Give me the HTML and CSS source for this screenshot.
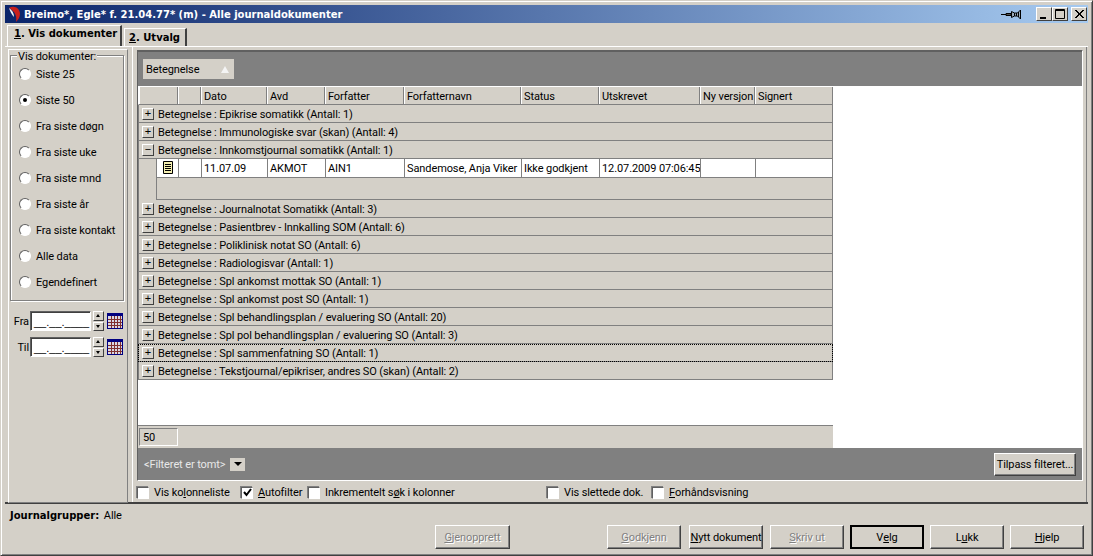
FILE: index.html
```html
<!DOCTYPE html>
<html lang="en">
<head>
  <meta charset="UTF-8" />
  <title>Alle journaldokumenter</title>
  <link rel="stylesheet" href="styles.css">
</head>
<body>
<div class="window">
  <div class="titlebar">
    <svg class="logo" width="16" height="18" viewBox="0 0 16 18"><path d="M3 3 C8 0 14 3 14 9 C14 12 12 15 10 17 C11 12 10 7 3 3Z" fill="#c8201c"/><path d="M3 3 C6 5 8 8 8 12 C6 10 4 6 3 3Z" fill="#f4f4f4"/></svg>
    <span class="title">Breimo*, Egle* f. 21.04.77* (m) - Alle journaldokumenter</span>
    <svg class="pin" width="22" height="11" viewBox="0 0 22 11"><path d="M0 5.500h9" stroke="#000"/><path d="M5 4.500h5v2H5z" stroke="#000" fill="#555"/><path d="M10.500 2.500l3 1.500h3l3-3v9l-3-3h-3l-3 1.500z" fill="#9ab" stroke="#000"/><path d="M13.500 4v3M15.500 4v3M17.500 3v5" stroke="#000"/></svg>
    <div class="win-btn first"><svg width="14" height="12" viewBox="0 0 14 12"><path d="M3 9h6v2H3z"/></svg></div>
    <div class="win-btn"><svg width="14" height="12" viewBox="0 0 14 12"><path d="M2.500 1.500h9v9h-9z M2 2.500h10" fill="none" stroke="#000"/></svg></div>
    <div class="win-btn close"><svg width="14" height="12" viewBox="0 0 14 12"><path d="M3 2l8 8M4 2l8 8M11 2l-8 8M12 2l-8 8" stroke="#000" fill="none"/></svg></div>
  </div>

  <div class="tabs">
    <div class="tab active"><u>1</u>. Vis dokumenter</div>
    <div class="tab"><u>2</u>. Utvalg</div>
  </div>

  <div class="panel">
    <div class="side">
      <div class="group">
        <span class="group-label">Vis dokumenter:</span>
        <div class="radio-row"><i class="radio"></i>Siste 25</div>
        <div class="radio-row"><i class="radio on"></i>Siste 50</div>
        <div class="radio-row"><i class="radio"></i>Fra siste døgn</div>
        <div class="radio-row"><i class="radio"></i>Fra siste uke</div>
        <div class="radio-row"><i class="radio"></i>Fra siste mnd</div>
        <div class="radio-row"><i class="radio"></i>Fra siste år</div>
        <div class="radio-row"><i class="radio"></i>Fra siste kontakt</div>
        <div class="radio-row"><i class="radio"></i>Alle data</div>
        <div class="radio-row"><i class="radio"></i>Egendefinert</div>
      </div>
      <div class="date-row">
        <span class="date-label">Fra</span>
        <div class="date-input">__.__.____</div>
        <div class="spin"><b class="up"></b><b class="down"></b></div>
        <svg class="cal" width="16" height="16" viewBox="0 0 16 16"><path d="M0 0h16v16H0z" fill="#000080"/><path d="M1 3h14v12H1z" fill="#d8d8e4"/><path d="M1 6.500h14M1 9.500h14M1 12.500h14M4.500 3v12M7.500 3v12M10.500 3v12M13.500 3v12" stroke="#803030"/></svg>
      </div>
      <div class="date-row">
        <span class="date-label">Til</span>
        <div class="date-input">__.__.____</div>
        <div class="spin"><b class="up"></b><b class="down"></b></div>
        <svg class="cal" width="16" height="16" viewBox="0 0 16 16"><path d="M0 0h16v16H0z" fill="#000080"/><path d="M1 3h14v12H1z" fill="#d8d8e4"/><path d="M1 6.500h14M1 9.500h14M1 12.500h14M4.500 3v12M7.500 3v12M10.500 3v12M13.500 3v12" stroke="#803030"/></svg>
      </div>
    </div>

    <div class="main">
      <div class="frame">
        <div class="group-bar">
          <div class="chip">Betegnelse <span class="sort"></span></div>
        </div>
        <div class="grid-area">
          <div class="grid">
            <div class="head">
              <span></span><span></span><span>Dato</span><span>Avd</span><span>Forfatter</span><span>Forfatternavn</span><span>Status</span><span>Utskrevet</span><span>Ny versjon</span><span>Signert</span>
            </div>
            <div class="grp"><i class="exp">+</i>Betegnelse : Epikrise somatikk (Antall: 1)</div>
            <div class="grp"><i class="exp">+</i>Betegnelse : Immunologiske svar (skan) (Antall: 4)</div>
            <div class="grp"><i class="exp">−</i>Betegnelse : Innkomstjournal somatikk (Antall: 1)</div>
            <div class="expanded">
              <div class="data">
                <span class="doc"><svg width="12" height="13" viewBox="0 0 12 13"><path d="M1.500 .5h9v12h-9z" fill="#f4eeb0" stroke="#000"/><path d="M3 3.500h6M3 5.500h6M3 7.500h6M3 9.500h6" stroke="#000"/></svg></span>
                <span></span><span>11.07.09</span><span>AKMOT</span><span>AIN1</span><span>Sandemose, Anja Viker</span><span>Ikke godkjent</span><span>12.07.2009 07:06:45</span><span></span><span></span>
              </div>
              <div class="blank"></div>
            </div>
            <div class="grp"><i class="exp">+</i>Betegnelse : Journalnotat Somatikk (Antall: 3)</div>
            <div class="grp"><i class="exp">+</i>Betegnelse : Pasientbrev - Innkalling SOM (Antall: 6)</div>
            <div class="grp"><i class="exp">+</i>Betegnelse : Poliklinisk notat SO (Antall: 6)</div>
            <div class="grp"><i class="exp">+</i>Betegnelse : Radiologisvar (Antall: 1)</div>
            <div class="grp"><i class="exp">+</i>Betegnelse : Spl ankomst mottak SO (Antall: 1)</div>
            <div class="grp"><i class="exp">+</i>Betegnelse : Spl ankomst post SO (Antall: 1)</div>
            <div class="grp"><i class="exp">+</i>Betegnelse : Spl behandlingsplan / evaluering SO (Antall: 20)</div>
            <div class="grp"><i class="exp">+</i>Betegnelse : Spl pol behandlingsplan / evaluering SO (Antall: 3)</div>
            <div class="grp focus"><i class="exp">+</i>Betegnelse : Spl sammenfatning SO (Antall: 1)</div>
            <div class="grp"><i class="exp">+</i>Betegnelse : Tekstjournal/epikriser, andres SO (skan) (Antall: 2)</div>
            <div class="grid-fill"></div>
            <div class="count"><span class="count-cell">50</span></div>
          </div>
        </div>
        <div class="filter-bar">
          <span class="filter-text">&lt;Filteret er tomt&gt;</span>
          <div class="filter-drop"><span></span></div>
          <div class="btn filter-btn">Tilpass filteret...</div>
        </div>
      </div>
      <div class="checks">
        <label class="check w-a"><i class="box"></i>Vis ko<u>l</u>onneliste</label>
        <label class="check w-b"><i class="box"><svg width="9" height="9" viewBox="0 0 9 9"><path d="M1 4l2.500 3L8 1" fill="none" stroke="#000" stroke-width="2"/></svg></i><u>A</u>utofilter</label>
        <label class="check w-c"><i class="box"></i>Inkrementelt s<u>ø</u>k i kolonner</label>
        <label class="check w-d"><i class="box"></i>Vis slettede dok.</label>
        <label class="check"><i class="box"></i><u>F</u>orhåndsvisning</label>
      </div>
    </div>
  </div>

  <div class="footer">
    <div class="journal"><b>Journalgrupper:</b> Alle</div>
    <div class="buttons">
      <div class="btn wide disabled restore"><u>G</u>jenopprett</div>
      <div class="btn wide disabled approve"><u>G</u>odkjenn</div>
      <div class="btn wide new-doc"><u>N</u>ytt dokument</div>
      <div class="btn wide disabled"><u>S</u>kriv ut</div>
      <div class="btn wide default">V<u>e</u>lg</div>
      <div class="btn wide">L<u>u</u>kk</div>
      <div class="btn wide"><u>H</u>jelp</div>
    </div>
  </div>
</div>
</body>
</html>
```

FILE: styles.css
```css
* {
  box-sizing: border-box;
}
html, body {
  margin: 0;
  height: 100%;
  overflow: hidden;
}
body {
  font-family: Roboto, "Liberation Sans", Arial, sans-serif;
  font-size: 11px;
  letter-spacing: -.1px;
  color: #000;
  background: #d4d0c8;
}
i {
  font-style: normal;
}

/* window frame */
.window {
  width: 1093px;
  height: 556px;
  padding: 4px 4px 3px 4px;
  background: #d4d0c8;
  border: 1px solid #404040;
  border-top-color: #d4d0c8;
  border-left-color: #d4d0c8;
  box-shadow: inset 1px 1px 0 #fff, inset -1px -1px 0 #808080;
  display: flex;
  flex-direction: column;
}
.titlebar {
  height: 18px;
  flex: none;
  display: flex;
  align-items: center;
  background: linear-gradient(to right, #0a246a, #a6caf0);
  color: #fff;
  padding-right: 1px;
}
.logo {
  margin: 0 2px 0 1px;
  flex: none;
}
.title {
  font-family: "DejaVu Sans", sans-serif;
  font-weight: bold;
  font-size: 10px;
  letter-spacing: 0;
  flex: 1;
}
.pin {
  margin-right: 13px;
}
.win-btn {
  width: 16px;
  height: 14px;
  background: #d4d0c8;
  border: 1px solid;
  border-color: #fff #404040 #404040 #fff;
  display: flex;
  align-items: center;
  justify-content: center;
}
.win-btn svg {
  display: block;
}
.win-btn.close {
  margin-left: 3px;
}

/* tabs */
.tabs {
  height: 23px;
  flex: none;
  display: flex;
  align-items: flex-end;
  padding-left: 2px;
}
.tab {
  height: 18px;
  padding: 2px 5px 0 4px;
  font-family: "DejaVu Sans", sans-serif;
  font-size: 10px;
  letter-spacing: 0;
  line-height: 14px;
  font-weight: bold;
  border-top: 1px solid #fff;
  border-left: 1px solid #fff;
  border-right: 2px solid #404040;
}
.tab.active {
  width: 115px;
  height: 21px;
  padding: 1px 0 0 6px;
  margin-right: 2px;
  white-space: nowrap;
}

.panel {
  height: 458px;
  flex: none;
  border-top: 1px solid #fff;
  border-bottom: 2px solid #404040;
  display: flex;
  padding-left: 3px;
}

/* left column */
.side {
  width: 120px;
  height: 454px;
  margin-top: 2px;
  padding: 5px 3px 0 1px;
  border: 1px solid #808080;
  border-top-color: #fff;
  border-left-color: #fff;
  flex: none;
}
.group {
  position: relative;
  height: 246px;
  border: 1px solid #808080;
  box-shadow: 1px 1px 0 #fff, inset 1px 1px 0 #fff;
  padding-top: 5px;
}
.group-label {
  position: absolute;
  top: -6px;
  left: 6px;
  padding: 0 1px;
  background: #d4d0c8;
  white-space: nowrap;
}
.radio-row {
  height: 26px;
  display: flex;
  align-items: center;
  padding-left: 8px;
  white-space: nowrap;
}
.radio {
  width: 12px;
  height: 12px;
  margin-right: 5px;
  border-radius: 50%;
  background: #fff;
  border: 1px solid;
  border-color: #606060 #fff #fff #606060;
  display: flex;
  align-items: center;
  justify-content: center;
}
.radio.on::after {
  content: "";
  width: 4px;
  height: 4px;
  border-radius: 50%;
  background: #000;
}
.date-row {
  height: 26px;
  display: flex;
  align-items: center;
  margin-left: 2px;
}
.group + .date-row {
  margin-top: 7px;
}
.date-label {
  width: 18px;
  text-align: right;
  padding-right: 1px;
}
.date-input {
  width: 61px;
  height: 20px;
  background: #fff;
  border: 1px solid;
  border-color: #606060 #fff #fff #606060;
  box-shadow: inset 1px 1px 0 #404040;
  padding: 3px 0 0 3px;
  font-family: "Liberation Sans", sans-serif;
  letter-spacing: 0;
  line-height: 14px;
}
.spin {
  width: 11px;
  height: 20px;
  margin-left: 2px;
  display: flex;
  flex-direction: column;
  gap: 1px;
}
.spin b {
  flex: 1;
  background: #d4d0c8;
  border: 1px solid;
  border-color: #fff #404040 #404040 #fff;
  position: relative;
}
.spin b::after {
  content: "";
  position: absolute;
  left: 2px;
  top: 2px;
  border-left: 2px solid transparent;
  border-right: 2px solid transparent;
}
.spin .up::after {
  border-bottom: 3px solid #000;
}
.spin .down::after {
  border-top: 3px solid #000;
}
.cal {
  margin-left: 3px;
}

/* main area */
.main {
  width: 955px;
  margin-left: 4px;
  padding: 3px 0 0 0;
  border-left: 1px solid #fff;
  border-right: 1px solid #808080;
  display: flex;
  flex-direction: column;
}
.frame {
  margin: 0 3px 0 4px;
  height: 431px;
  flex: none;
  border: 1px solid;
  border-color: #606060 #fff #fff #606060;
  background: #808080;
  display: flex;
  flex-direction: column;
}
.group-bar {
  height: 35px;
  flex: none;
  border-top: 1px solid #606060;
  padding: 7px 0 0 5px;
}
.chip {
  width: 91px;
  height: 20px;
  background: #d4d0c8;
  display: flex;
  align-items: center;
  justify-content: space-between;
  padding: 0 3px 0 3px;
}
.sort {
  margin-right: 2px;
  border-left: 4px solid transparent;
  border-right: 4px solid transparent;
  border-bottom: 7px solid #f4f4f4;
}
.grid-area {
  flex: 1;
  background: #fff;
  display: flex;
}
.grid {
  width: 695px;
  display: flex;
  flex-direction: column;
  border-top: 1px solid #fff;
}
.head, .data {
  display: grid;
  grid-template-columns: 39px 23px 66px 58px 79px 117px 78px 101px 55px 1fr;
}
.head {
  height: 18px;
  background: #d4d0c8;
  border-bottom: 1px solid #808080;
  border-left: 1px solid #fff;
  border-right: 1px solid #808080;
  line-height: 19px;
}
.head span {
  padding-left: 2px;
  border-left: 1px solid #fff;
  border-right: 1px solid #808080;
  white-space: nowrap;
  overflow: hidden;
}
.head span:last-child {
  border-right: 0;
}
.grp {
  height: 18px;
  background: #d4d0c8;
  border-bottom: 1px solid #808080;
  border-left: 1px solid #808080;
  border-right: 1px solid #808080;
  display: flex;
  align-items: center;
  padding: 1px 0 0 3px;
  white-space: nowrap;
}
.grp.focus {
  outline: 1px dotted #000;
  outline-offset: -1px;
}
.exp {
  width: 12px;
  height: 12px;
  margin: -1px 4px 0 0;
  border: 1px solid;
  border-color: #fff #404040 #404040 #fff;
  font-family: "Liberation Sans", sans-serif;
  font-size: 11px;
  line-height: 9px;
  text-align: center;
}
.expanded {
  background: #d4d0c8;
  border-left: 1px solid #808080;
  border-right: 1px solid #808080;
  padding-left: 17px;
}
.data {
  height: 19px;
  grid-template-columns: 22px 23px 66px 58px 79px 117px 78px 101px 55px 1fr;
  background: #fff;
  border-bottom: 1px solid #808080;
  border-left: 1px solid #808080;
  line-height: 20px;
}
.data span {
  padding-left: 2px;
  border-right: 1px solid #808080;
  white-space: nowrap;
  overflow: hidden;
}
.data span:last-child {
  border-right: 0;
}
.data .doc {
  padding: 2px 0 0 5px;
  line-height: 0;
}
.blank {
  height: 22px;
  border-bottom: 1px solid #808080;
  border-left: 1px solid #808080;
}
.grid-fill {
  flex: 1;
  background: #fff;
}
.count {
  height: 23px;
  background: #d4d0c8;
  padding: 2px 0 0 1px;
  border-top: 1px solid #808080;
}
.count-cell {
  display: block;
  width: 39px;
  height: 18px;
  padding: 2px 0 0 3px;
  border: 1px solid;
  border-color: #808080 #fff #fff #808080;
}
.filter-bar {
  height: 32px;
  flex: none;
  display: flex;
  align-items: center;
  padding: 0 6px 0 6px;
  color: #e8e8e8;
}
.filter-text {
  width: 86px;
  white-space: nowrap;
}
.filter-drop {
  width: 15px;
  height: 13px;
  background: #d4d0c8;
  display: flex;
  align-items: center;
  justify-content: center;
}
.filter-drop span {
  border-left: 4px solid transparent;
  border-right: 4px solid transparent;
  border-top: 4px solid #000;
}
.btn {
  background: #d4d0c8;
  color: #000;
  border: 1px solid;
  border-color: #fff #404040 #404040 #fff;
  box-shadow: inset -1px -1px 0 #808080;
  display: flex;
  align-items: center;
  justify-content: center;
  white-space: nowrap;
}
.filter-btn {
  width: 82px;
  height: 23px;
  margin-left: auto;
}
.checks {
  display: flex;
  align-items: center;
  height: 20px;
  margin-top: 2px;
  padding-left: 4px;
}
.check {
  display: flex;
  align-items: center;
  white-space: nowrap;
}
.box {
  width: 12px;
  height: 12px;
  flex: none;
  margin-right: 5px;
  background: #fff;
  border: 1px solid;
  border-color: #606060 #fff #fff #606060;
  box-shadow: -1px -1px 0 #808080;
  display: flex;
  align-items: center;
  justify-content: center;
}
.box svg {
  display: block;
}
.w-a {
  width: 104px;
}
.w-b {
  width: 67px;
}
.w-c {
  width: 239px;
}
.w-d {
  width: 105px;
}

/* bottom */
.footer {
  flex: 1;
}
.journal {
  padding: 5px 0 0 5px;
  height: 21px;
}
.journal b {
  font-family: "DejaVu Sans", sans-serif;
  font-size: 10px;
  letter-spacing: 0;
  margin-right: 2px;
}
.buttons {
  display: flex;
  gap: 6px;
  padding-right: 4px;
  justify-content: flex-end;
}
.wide {
  width: 74px;
  height: 24px;
}
.restore {
  width: 75px;
  margin-right: 91px;
}
.approve {
  margin-right: 2px;
}
.new-doc {
  margin-right: 1px;
}
.disabled {
  color: #808080;
  text-shadow: 1px 1px 0 #fff;
}
.default {
  border: 2px solid #000;
  box-shadow: none;
}
```
